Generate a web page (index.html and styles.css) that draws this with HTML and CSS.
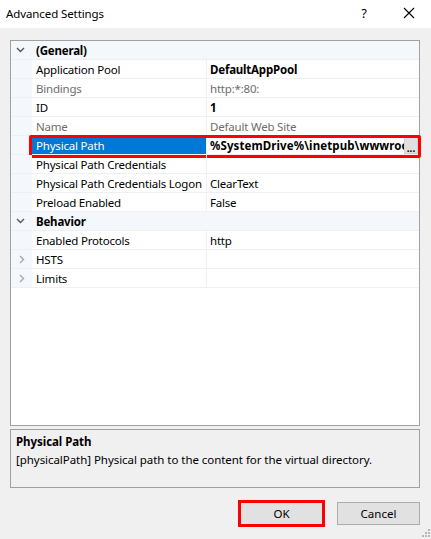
FILE: index.html
```html
<!DOCTYPE html>
<html>
<head>
<meta charset="utf-8">
<link rel="stylesheet" href="styles.css">
</head>
<body>
<div class="window">
  <div class="titlebar">
    <span class="title">Advanced Settings</span>
    <span class="help">?</span>
    <svg class="close" width="12" height="12" viewBox="0 0 12 12"><path d="M1 1L11 11M11 1L1 11" stroke="#000" stroke-width="1.1" fill="none"/></svg>
  </div>
  <div class="content">
    <div class="grid">
      <div class="row cat">
        <div class="gut"><svg width="9" height="6" viewBox="0 0 9 6"><path d="M1 1L4.5 4.5L8 1" stroke="#555" stroke-width="1.4" fill="none"/></svg></div>
        <div class="name">(General)</div>
      </div>
      <div class="row"><div class="gut"></div><div class="name">Application Pool</div><div class="val bold">DefaultAppPool</div></div>
      <div class="row ro"><div class="gut"></div><div class="name">Bindings</div><div class="val">http:*:80:</div></div>
      <div class="row"><div class="gut"></div><div class="name">ID</div><div class="val bold">1</div></div>
      <div class="row ro"><div class="gut"></div><div class="name">Name</div><div class="val">Default Web Site</div></div>
      <div class="row sel">
        <div class="gut"></div>
        <div class="name">Physical Path</div>
        <div class="val bold"><span class="clip">%SystemDrive%\inetpub\wwwroot</span><span class="dots">...</span></div>
        <div class="mark"></div>
      </div>
      <div class="row"><div class="gut"></div><div class="name">Physical Path Credentials</div><div class="val"></div></div>
      <div class="row"><div class="gut"></div><div class="name">Physical Path Credentials Logon</div><div class="val">ClearText</div></div>
      <div class="row"><div class="gut"></div><div class="name">Preload Enabled</div><div class="val">False</div></div>
      <div class="row cat">
        <div class="gut"><svg width="9" height="6" viewBox="0 0 9 6"><path d="M1 1L4.5 4.5L8 1" stroke="#555" stroke-width="1.4" fill="none"/></svg></div>
        <div class="name">Behavior</div>
      </div>
      <div class="row"><div class="gut"></div><div class="name">Enabled Protocols</div><div class="val">http</div></div>
      <div class="row"><div class="gut"><svg width="6" height="9" viewBox="0 0 6 9"><path d="M1 1L4.5 4.5L1 8" stroke="#a8a8a8" stroke-width="1.4" fill="none"/></svg></div><div class="name">HSTS</div><div class="val"></div></div>
      <div class="row"><div class="gut"><svg width="6" height="9" viewBox="0 0 6 9"><path d="M1 1L4.5 4.5L1 8" stroke="#a8a8a8" stroke-width="1.4" fill="none"/></svg></div><div class="name">Limits</div><div class="val"></div></div>
    </div>
    <div class="desc">
      <div class="desc-title">Physical Path</div>
      <div class="desc-text">[physicalPath] Physical path to the content for the virtual directory.</div>
    </div>
    <div class="buttons">
      <button class="btn ok">OK</button>
      <button class="btn">Cancel</button>
    </div>
  </div>
  <svg class="grip" width="8" height="8" viewBox="0 0 8 8">
    <rect x="6" y="0" width="2" height="2" fill="#b8b8b8"/>
    <rect x="3" y="3" width="2" height="2" fill="#b8b8b8"/>
    <rect x="6" y="3" width="2" height="2" fill="#b8b8b8"/>
    <rect x="0" y="6" width="2" height="2" fill="#b8b8b8"/>
    <rect x="3" y="6" width="2" height="2" fill="#b8b8b8"/>
    <rect x="6" y="6" width="2" height="2" fill="#b8b8b8"/>
  </svg>
</div>
</body>
</html>
```
FILE: styles.css
```css
* { box-sizing: border-box; }
html, body { margin: 0; padding: 0; }
body {
  width: 431px;
  height: 539px;
  background: #f0f0f0;
  font-family: "Noto Sans", "Open Sans", sans-serif;
  font-size: 11.5px;
  color: #000;
  overflow: hidden;
}
.window { position: relative; width: 431px; height: 539px; }
.titlebar {
  height: 28px;
  background: #fff;
  display: flex;
  align-items: center;
  padding-left: 6px;
}
.title { flex: 1; font-size: 11.5px; letter-spacing: -0.1px; position: relative; top: -1px; }
.help { font-size: 13px; margin-right: 36px; position: relative; top: -1px; }
.close { margin-right: 16px; position: relative; top: -1px; }
.content { padding: 12px 11px 0 10px; }
.grid {
  height: 386px;
  border: 1px solid #a0a0a0;
  background: #fff;
}
.row {
  position: relative;
  display: grid;
  grid-template-columns: 21px 175px 1fr;
  height: 19px;
  border-bottom: 1px solid #f0f0f4;
  line-height: 20px;
  white-space: nowrap;
  letter-spacing: -0.2px;
}
.gut {
  background: #f4f7fc;
  display: flex;
  align-items: center;
  justify-content: center;
}
.name {
  padding-left: 4px;
  border-right: 1px solid #f0f0f4;
  overflow: hidden;
}
.val { padding-left: 3px; overflow: hidden; display: flex; }
.bold { font-weight: bold; }
.ro .name, .ro .val { color: #6d6d6d; }
.cat { background: #f4f7fc; grid-template-columns: 21px 1fr; }
.cat .name { font-weight: bold; border-right: none; }
.cat .gut { justify-content: flex-end; padding-right: 7px; }
.sel .name { background: #0078d7; color: #fff; }
.sel .val { padding-right: 1px; }
.clip { flex: 1; overflow: hidden; letter-spacing: 0.1px; }
.dots {
  flex: none;
  width: 14px;
  height: 17px;
  margin-top: 1px;
  background: #e1e1e1;
  border: 1px solid #d0d0d0;
  font-weight: bold;
  font-size: 10px;
  line-height: 20px;
  text-align: center;
  letter-spacing: 0;
  overflow: hidden;
}
.mark {
  position: absolute;
  left: 18px;
  top: -1px;
  width: 392px;
  height: 23px;
  border: 3px solid #ff0000;
  border-radius: 2px;
}
.desc {
  margin-top: 3px;
  height: 59px;
  border: 1px solid #a0a0a0;
  padding: 3px 5px;
  line-height: 18px;
  letter-spacing: -0.05px;
}
.desc-title { font-weight: bold; }
.buttons {
  display: flex;
  justify-content: flex-end;
  gap: 14px;
  margin-top: 14px;
}
.btn {
  position: relative;
  width: 83px;
  height: 23px;
  background: #e1e1e1;
  border: 1px solid #adadad;
  font-family: inherit;
  font-size: 11.5px;
  padding: 0;
  color: #000;
}
.ok { outline: 3px solid #ff0000; outline-offset: -1px; border-radius: 0; }
.grip { position: absolute; right: 1px; bottom: 2px; }
```
